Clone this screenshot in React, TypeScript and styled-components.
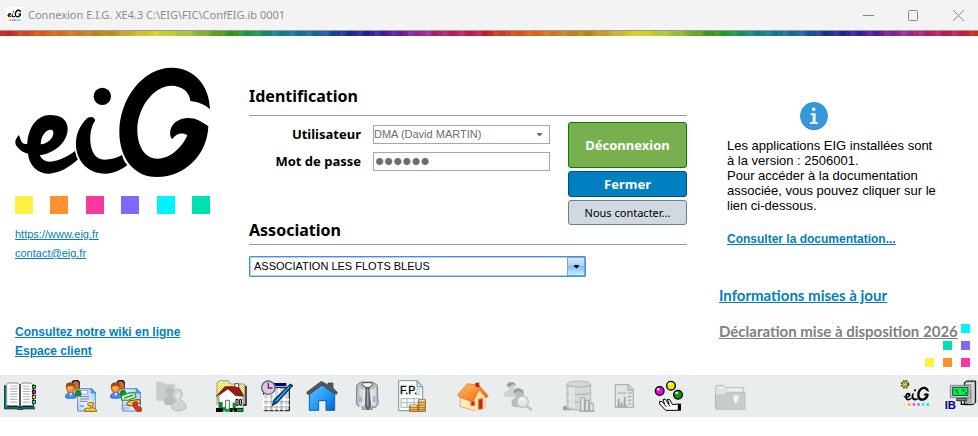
import React from "react";
import styled, { createGlobalStyle } from "styled-components";

const GlobalStyle = createGlobalStyle`
  * { box-sizing: border-box; }
  body { margin: 0; background: #fff; color: #000; font-family: "Liberation Sans", Arial, sans-serif; }
`;

const Window = styled.div`
  display: flex;
  flex-direction: column;
`;

const TitleBar = styled.header`
  display: flex;
  align-items: center;
  height: 31px;
  padding-left: 6px;
  background: #f3f3f3;
  border-bottom: 1px solid #999;
`;

const AppIcon = styled.span`
  display: flex;
  width: 16px;
  height: 16px;
  padding: 1px;
  background: #fff;
`;

const WindowTitle = styled.h1`
  flex: 1;
  margin: 0 0 0 6px;
  font: 400 11px/16px "Noto Sans", sans-serif;
  color: #8c8c8c;
`;

const WindowControls = styled.div`
  display: flex;
  gap: 6px;
`;

const WindowButton = styled.button`
  display: grid;
  place-items: center;
  width: 39px;
  height: 28px;
  padding: 0;
  border: 0;
  background: none;
`;

const Rainbow = styled.div`
  height: 5px;
  background:
    repeating-linear-gradient(90deg, rgba(255,255,255,0.1) 0 4px, rgba(255,255,255,0) 8px 12px, rgba(255,255,255,0.06) 14px, rgba(255,255,255,0) 17px),
    repeating-linear-gradient(90deg, #c01818 0, #cc4020 22px, #e05a10 46px, #c87c20 78px, #b88408 106px, #c8a828 128px, #d8d020 156px, #a0c030 190px, #389010 228px, #189838 246px, #108088 276px, #1860a0 320px, #182888 345px, #2020a0 370px, #581890 395px, #902898 420px, #a82068 438px, #c01848 483px);
`;

const Main = styled.main`
  position: relative;
  display: grid;
  grid-template-columns: 234px minmax(0, 1fr) 291px;
  min-height: 339px;
  padding-left: 15px;
`;

const BrandColumn = styled.section`
  display: flex;
  flex-direction: column;
  align-items: flex-start;
  padding: 31px 0 14px;
`;

const Swatches = styled.div`
  display: flex;
  justify-content: space-between;
  width: 195px;
  margin: 18px 0 11px;
`;

const Swatch = styled.span<{ $color: string; $size?: number }>`
  width: ${(p) => p.$size ?? 18}px;
  height: ${(p) => p.$size ?? 18}px;
  background: ${(p) => p.$color};
`;

const Link = styled.a<{ $bold?: boolean }>`
  color: #0080c0;
  font-size: ${(p) => (p.$bold ? 12 : 11)}px;
  font-weight: ${(p) => (p.$bold ? 700 : 400)};
  line-height: 19px;
`;

const BrandFooter = styled.div`
  display: flex;
  flex-direction: column;
  margin-top: auto;
`;

const FormColumn = styled.form`
  display: flex;
  flex-direction: column;
  padding-top: 48px;
`;

const Heading = styled.h2<{ $tight?: boolean }>`
  margin: 0;
  padding-bottom: ${(p) => (p.$tight ? 2 : 7)}px;
  border-bottom: 1px solid #999;
  font: 700 16px/24px "Noto Sans", sans-serif;
`;

const Login = styled.div`
  display: flex;
  justify-content: space-between;
  margin: 6px 0 -7px;
`;

const Fields = styled.div`
  display: grid;
  grid-template-columns: 112px 177px;
  column-gap: 12px;
  row-gap: 8px;
  align-content: start;
  align-items: center;
  padding-top: 3px;
`;

const Label = styled.label`
  text-align: right;
  font: 700 13px/19px "Noto Sans", sans-serif;
`;

const SelectFrame = styled.span<{ $active?: boolean }>`
  display: grid;
  grid-template-columns: minmax(0, 1fr) ${(p) => (p.$active ? 18 : 19)}px;
  width: ${(p) => (p.$active ? 337 : 177)}px;
  height: ${(p) => (p.$active ? 21 : 19)}px;
  border: 1px solid ${(p) => (p.$active ? "#4a90d8" : "#aca899")};
  border-radius: ${(p) => (p.$active ? 1 : 0)}px;
  box-shadow: ${(p) => (p.$active ? "inset 0 0 0 1px #a8d0f8" : "none")};
`;

const Select = styled.select<{ $active?: boolean }>`
  grid-area: 1 / 1 / 2 / 3;
  width: 100%;
  padding: 0 20px 0 ${(p) => (p.$active ? 4 : 0)}px;
  border: 0;
  appearance: none;
  background: none;
  color: ${(p) => (p.$active ? "#000" : "#6d6d6d")};
  opacity: 1;
  font: 400 11px/17px "Liberation Sans", Arial, sans-serif;
`;

const Arrow = styled.span<{ $active?: boolean }>`
  grid-area: 1 / 2;
  display: grid;
  place-items: center;
  pointer-events: none;
  background: ${(p) => (p.$active ? "linear-gradient(#d8e8fc, #a8d0f8 45%, #80bcf4 50%, #c8f0fc)" : "none")};
  border: ${(p) => (p.$active ? "1px solid #78a8d8" : "0")};
`;

const Password = styled.input`
  width: 177px;
  height: 19px;
  padding: 0 1px;
  border: 1px solid #aca899;
  background: #fff;
  color: #6d6d6d;
  font: 400 26px/17px "Liberation Sans", Arial, sans-serif;
`;

const Actions = styled.div`
  display: flex;
  flex-direction: column;
  gap: 3px;
  width: 119px;
`;

const tones = {
  green: { bg: "#78b050", edge: "#008000", ink: "#fff", height: 46 },
  blue: { bg: "#0080c0", edge: "#005080", ink: "#fff", height: 26 },
  grey: { bg: "#d0d8e0", edge: "#6080a0", ink: "#000", height: 25 },
};

const ActionButton = styled.button<{ $tone: keyof typeof tones }>`
  height: ${(p) => tones[p.$tone].height}px;
  padding: 0;
  border: 1px solid ${(p) => tones[p.$tone].edge};
  border-radius: 3px;
  background: ${(p) => tones[p.$tone].bg};
  color: ${(p) => tones[p.$tone].ink};
  font: ${(p) => (p.$tone === "grey" ? "400 11px" : "700 13px")}/18px "Noto Sans", sans-serif;
`;

const AssociationRow = styled.div`
  display: flex;
  padding-top: 11px;
`;

const InfoColumn = styled.aside`
  display: flex;
  flex-direction: column;
  align-items: flex-start;
  padding: 66px 0 0 32px;
`;

const InfoBox = styled.div`
  display: flex;
  flex-direction: column;
  width: 208px;
  padding-left: 8px;
  margin-bottom: 36px;
`;

const InfoIcon = styled.svg`
  align-self: center;
  margin-right: 26px;
`;

const InfoText = styled.p`
  margin: 8px 0 17px;
  font-size: 13px;
  line-height: 15px;
  white-space: nowrap;
`;

const NewsLink = styled.a<{ $muted?: boolean }>`
  margin-bottom: 16px;
  color: ${(p) => (p.$muted ? "#808080" : "#0080c0")};
  font: 700 15px/20px Lato, sans-serif;
  white-space: nowrap;
`;

const Corner = styled.div`
  position: absolute;
  right: 8px;
  bottom: 8px;
  display: grid;
  grid-template-columns: repeat(3, 9px);
  gap: 8px 9px;
`;

const CornerSwatch = styled(Swatch)<{ $col: number; $row: number }>`
  grid-area: ${(p) => p.$row} / ${(p) => p.$col};
`;

const Toolbar = styled.nav`
  display: flex;
  align-items: center;
  justify-content: space-between;
  height: 42px;
  padding: 0 1px 0 4px;
  background: #e9eded;
`;

const ToolSet = styled.div`
  display: flex;
  gap: 29px;
`;

const ToolGroup = styled.div`
  display: flex;
  gap: 13px;
`;

const ToolButton = styled.button`
  width: 32px;
  height: 32px;
  padding: 0;
  border: 0;
  background: none;
`;

const ToolSvg = styled.svg`
  display: block;
  width: 32px;
  height: 32px;
`;

const colors = ["#fcf040", "#ff9030", "#fc38a0", "#8068ff", "#00f4ff", "#00e0b0"];

function LogoShape() {
  return (
    <g fill="#000" fillRule="evenodd">
      <path d="M57 255C45 267 42 281 52 291C61 302 72 309 84 311C88 347 112 371 148 371C182 369 210 350 234 328C229 322 228 314 225 303C200 321 175 335 146 335C133 334 125 327 119 316C170 309 204 272 203 235C202 208 181 195 150 195C111 195 84 233 82 281C65 285 63 272 57 255ZM122 283C123 252 143 235 157 240C168 252 150 282 122 283Z" />
      <path d="M258 208C267 197 286 199 285 213C264 238 261 328 313 329C333 329 349 324 366 315C370 328 373 336 382 345C362 361 340 371 315 371C264 370 232 334 228 290C226 256 238 229 258 208Z" />
      <circle cx="307" cy="139" r="26" />
      <path d="M630 178C629 105 580 53 515 53C426 53 358 150 358 245C358 323 401 381 471 381C557 381 622 313 625 229C605 214 586 204 565 204C531 204 502 229 513 263L517 267C527 250 548 245 562 256C549 287 514 326 474 326C434 326 412 288 412 239C412 172 462 107 514 107C546 107 569 126 571 153C596 156 613 163 630 178Z" />
    </g>
  );
}

function MiniLogo() {
  return (
    <svg width="14" height="14" viewBox="0 0 42 42" aria-hidden="true">
      <g transform="translate(-3 1) scale(.073)"><LogoShape /></g>
      {colors.map((c, i) => <rect key={c} x={i * 7} y="34" width="5" height="5" fill={c} />)}
    </svg>
  );
}

const DownArrow = ({ color }: { color: string }) => (
  <svg width="7" height="4" viewBox="0 0 7 4" aria-hidden="true">
    <path d="M1 0H6V1L3.500 3.500L1 1Z" fill={color} />
  </svg>
);

const Book = () => (
  <g transform="translate(1 9) scale(1 .88)">
    <path d="M0 8H6V82H44L48 87L52 82H92V88H56V90H40V88H0Z" fill="#007878" />
    <path d="M0 8V88H40V90H56V88H92" fill="none" stroke="#003838" strokeWidth="3" />
    <path d="M7 4L12 0H38L47 6L56 0H80L84 5V77H56L47 83L39 77H7Z" fill="#fff" stroke="#888" strokeWidth="3" />
    <path d="M47 5V82" stroke="#000" strokeWidth="4" />
    <path d="M7 80H40L47 85L54 80H88V4" fill="none" stroke="#000" strokeWidth="3" />
    <path d="M18 11H39M16 20H40M18 29H39M16 38H40M18 47H39M16 56H40M18 65H39M55 11H76M57 20H76M55 29H78M57 38H76M55 47H78M57 56H76M55 65H78" stroke="#b8b8b8" strokeWidth="4" />
    {["#00f000", "#f000f0", "#f0f000", "#00f0f0"].map((c, i) => (
      <rect key={c} x="84" y={9 + i * 17} width="10" height="10" fill={c} stroke="#000" strokeWidth="2" />
    ))}
  </g>
);

const Pair = () => (
  <>
    <path d="M20 4L27 0H40L45 7L44 26H24Z" fill="#281828" />
    <ellipse cx="32" cy="17" rx="10" ry="13" fill="#c87028" />
    <path d="M32 33L44 30L48 38V48H30Z" fill="#189018" stroke="#087008" strokeWidth="2" />
    <path d="M3 44L10 37H25L33 46V53L26 55H5L1 51Z" fill="#4888f0" stroke="#1850b8" strokeWidth="2" />
    <path d="M12 37L17 49L23 37Z" fill="#fff" />
    <ellipse cx="17" cy="24" rx="13" ry="15" fill="#e88c30" stroke="#904010" strokeWidth="2" />
    <path d="M3 23C-1 6 17 5 28 11L31 23L23 17L8 19Z" fill="#984818" />
    <ellipse cx="15" cy="25" rx="7" ry="7" fill="#fca850" />
  </>
);

const BlueSheet = () => (
  <>
    <defs>
      <linearGradient id="sheet" x1="1" y1="0" x2="0" y2="1">
        <stop stopColor="#a0d0f8" /><stop offset=".6" stopColor="#e8f4ff" /><stop offset="1" stopColor="#b8d0f8" />
      </linearGradient>
    </defs>
    <path d="M38 26H80L91 38V93H38Z" fill="url(#sheet)" stroke="#6088d0" strokeWidth="3" />
    <path d="M79 25V39H92Z" fill="#50b0f0" stroke="#2078c8" strokeWidth="2" />
  </>
);

const PeopleMoney = () => (
  <>
    <BlueSheet />
    <path d="M45 31H68V42H45Z" fill="#fff" stroke="#7880b0" strokeWidth="2" />
    <path d="M44 50H72M44 57H72M44 64H68M44 78H58" stroke="#7078b0" strokeWidth="3" />
    <Pair />
    <path d="M68 70L79 67L87 70L81 84H91L95 94H59V87L67 84L75 85L77 76L69 77Z" fill="#f0c020" stroke="#a06808" strokeWidth="3" />
    <path d="M70 73H81M64 89H73M80 89H90" stroke="#fff080" strokeWidth="3" />
  </>
);

const PeopleStamp = () => (
  <>
    <BlueSheet />
    <path d="M32 76H50M32 84H59" stroke="#90a8d8" strokeWidth="3" />
    <Pair />
    <path d="M34 48L57 39L75 38L78 51L53 61L35 60Z" fill="#e0f8e0" stroke="#28a038" strokeWidth="4" />
    <path d="M43 54L70 45" stroke="#28a038" strokeWidth="4" />
    <path d="M49 70L59 62L88 58L92 69L65 78L52 76Z" fill="#f0b850" stroke="#804010" strokeWidth="3" />
    <path d="M69 68L80 64L83 78L94 83L95 93L83 96L70 82Z" fill="#d83818" stroke="#882010" strokeWidth="2" />
  </>
);

const GreyPeople = () => (
  <>
    <path d="M4 6H24L28 12H59V63H7L4 57Z" fill="#c8cccc" stroke="#d8dada" strokeWidth="3" />
    <path d="M28 67V54L40 48L32 38V26L43 20L55 28V41L49 50L61 60V75H30Z" fill="#b8bcbc" />
    <path d="M51 87V72L63 62L54 52V36L63 27L77 29L83 42L76 59L91 71L94 84L80 92H62Z" fill="#d0d4d4" stroke="#b8bcbc" strokeWidth="3" />
    <path d="M62 43L70 37L77 40L73 55L66 58Z" fill="#e2e5e5" />
  </>
);

const FolderHouse = () => (
  <>
    <defs>
      <pattern id="dither" width="6" height="6" patternUnits="userSpaceOnUse">
        <rect width="6" height="6" fill="#fff" /><path d="M0 0H3V3H0ZM3 3H6V6H3Z" fill="#f0e000" />
      </pattern>
    </defs>
    <path d="M3 75V9L10 2H36L42 12H86V73" fill="url(#dither)" stroke="#999" strokeWidth="3" />
    <path d="M90 17V75H82" fill="none" stroke="#000" strokeWidth="4" />
    <path d="M8 48L35 25L70 48H81V87H10Z" fill="#fff" stroke="#404040" strokeWidth="2" />
    <path d="M1 49L27 20H58V15H68V22L83 47H59L36 26Z" fill="#a01818" stroke="#500000" strokeWidth="2" />
    <path d="M57 21V11H68V24Z" fill="#fff" stroke="#600" strokeWidth="2" />
    <path d="M60 58H66V76H60ZM71 58H76V76H71Z" fill="#fff" stroke="#000" strokeWidth="3" />
    <path d="M8 66H20V82H29V62H40V85H50V68H59V83H79V91H8Z" fill="#008838" />
    <path d="M29 61H40V94H29Z" fill="#fff" stroke="#104010" strokeWidth="2" />
    <path d="M0 84H21V96H0ZM41 85H50V96H41Z" fill="#000" />
    <path d="M53 90H82" stroke="#000" strokeWidth="11" />
    <path d="M20 90H42M63 90H80" stroke="#00a830" strokeWidth="8" />
  </>
);

const Planner = () => (
  <>
    <path d="M8 23H85V92H8Z" fill="#d4d4d4" stroke="#000" strokeWidth="3" />
    <path d="M36 9H76V19H44Z" fill="#000080" />
    <path d="M8 44V92M23 44V92M39 33V92M54 24V92M69 40V92M8 59H85M8 75H85" stroke="#fff" strokeWidth="5" />
    <path d="M10 65H78M10 81H78M31 46V91M61 46V91" stroke="#999" strokeWidth="2" />
    <circle cx="22" cy="23" r="20" fill="#d0d0d8" stroke="#686870" strokeWidth="4" />
    <path d="M22 8V24H35" fill="none" stroke="#a000a0" strokeWidth="4" />
    <path d="M88 13L94 17L47 68L35 75L39 60Z" fill="#0878c8" stroke="#003060" strokeWidth="4" />
    <path d="M84 21L46 63" stroke="#60d0ff" strokeWidth="3" />
  </>
);

const BlueHouse = () => (
  <>
    <defs><linearGradient id="homeblue" x1="0" y1="0" x2="1" y2="1"><stop stopColor="#68c0ff" /><stop offset=".6" stopColor="#1898f8" /><stop offset="1" stopColor="#0060c8" /></linearGradient></defs>
    <path d="M10 43L48 15L86 43V91H60V62H38V91H10Z" fill="url(#homeblue)" stroke="#1860a0" strokeWidth="3" />
    <path d="M3 36L46 4L66 15V9H81V24L93 36V42H87L48 14L10 43L3 42Z" fill="#505860" stroke="#303840" strokeWidth="2" />
  </>
);

const Suit = () => (
  <>
    <path d="M17 15L30 6H65L79 16L81 73L74 82L64 81V88H34V81L21 78L16 70Z" fill="#b8bcc0" stroke="#80848c" strokeWidth="3" />
    <path d="M25 21L34 31V82H25ZM64 31L75 20V77H64Z" fill="#d0e0e4" />
    <path d="M24 50H34V66H24ZM65 48H74V66H65Z" fill="#b8a8d8" />
    <path d="M34 28H65V78H34Z" fill="#e0e8ec" />
    <path d="M37 8H59L66 13L50 27L33 13Z" fill="#f8f8f8" stroke="#404850" strokeWidth="3" />
    <path d="M45 22H54L59 79L51 90L43 80Z" fill="#686c74" stroke="#404448" strokeWidth="2" />
    <path d="M50 28V77" stroke="#a0a4ac" strokeWidth="4" />
  </>
);

const Coins = () => (
  <>
    <path d="M68 59H88V94H68ZM41 75H65V94H41Z" fill="#e8c070" stroke="#906020" strokeWidth="3" />
    <path d="M68 67H88M68 75H88M68 83H88M41 82H65M41 89H88" stroke="#b07828" strokeWidth="3" />
    <path d="M70 61H86M43 77H62" stroke="#fff0a0" strokeWidth="3" />
  </>
);

const PaySheet = () => (
  <>
    <path d="M8 2H64L80 20V92H8Z" fill="#f8fcfc" stroke="#809098" strokeWidth="3" />
    <path d="M63 2V21H80Z" fill="#d8e4e8" stroke="#809098" strokeWidth="3" />
    <path d="M15 56H72V82H15ZM15 68H72M33 56V82M54 56V82M60 28H73M60 36H73M60 43H73" fill="none" stroke="#a8b8bc" strokeWidth="3" />
    <text x="12" y="41" fontFamily="Liberation Sans, sans-serif" fontSize="32" stroke="#000" strokeWidth="1">F.P.</text>
    <Coins />
  </>
);

const OrangeHouse = () => (
  <>
    <defs><linearGradient id="warm" x1="0" y1="0" x2="1" y2="1"><stop stopColor="#ffc060" /><stop offset="1" stopColor="#f06008" /></linearGradient></defs>
    <path d="M10 47L36 33L62 29L85 48L84 83L52 92L9 79Z" fill="#ffe8c0" stroke="#d09050" strokeWidth="2" />
    <path d="M52 62L68 28L86 49L84 84L52 93Z" fill="#ffe0a8" />
    <path d="M2 45L31 11L66 16L94 48L87 54L67 29L47 66L6 50Z" fill="url(#warm)" stroke="#e06008" strokeWidth="2" />
    <path d="M55 8H67V23L55 20Z" fill="#b03010" />
    <path d="M42 64H53V77H42ZM65 58L77 56V86L65 88Z" fill="#a03820" stroke="#e07030" strokeWidth="3" />
  </>
);

const SearchPeople = () => (
  <>
    <path d="M6 49V38L22 29L14 17L21 7L34 6L42 14L36 27L43 38L38 52Z" fill="#d0d3d3" />
    <path d="M13 17L20 7H34L43 16L31 13L24 20Z" fill="#989ca0" />
    <path d="M29 77V60L43 50L34 40L37 29L50 24L64 31L66 44L58 54L67 65V81H38Z" fill="#b8bcbc" />
    <path d="M34 38L36 29L49 24L63 32L65 43L53 33Z" fill="#989ca0" />
    <circle cx="62" cy="65" r="17" fill="#e5e8e8" stroke="#c0c4c4" strokeWidth="4" />
    <path d="M74 78L87 88" stroke="#c0c4c4" strokeWidth="8" strokeLinecap="round" />
    <path d="M53 61L61 54L67 63" fill="none" stroke="#fff" strokeWidth="4" />
  </>
);

const Database = () => (
  <>
    <path d="M0 78H12V85H87L96 95H49V91H0Z" fill="#a0a4a4" />
    <path d="M12 12C12 0 83 0 83 12V80C83 93 12 93 12 80Z" fill="#d4d8d8" stroke="#b8bcbc" strokeWidth="3" />
    <path d="M12 13C12 23 83 23 83 13M12 36C12 46 83 46 83 36M12 59C12 69 83 69 83 59" fill="none" stroke="#b4b8b8" strokeWidth="4" />
    <path d="M22 20V80M31 22V84" stroke="#e5e8e8" strokeWidth="7" />
    <path d="M53 53H64V93H53ZM67 61H77V93H67ZM80 70H91V93H80Z" fill="#e0e3e3" stroke="#a0a4a4" strokeWidth="3" />
  </>
);

const Report = () => (
  <>
    <path d="M22 14H61L76 29V82H22Z" fill="#e2e5e5" stroke="#b0b4b4" strokeWidth="4" />
    <path d="M60 14V30H76" fill="#d0d4d4" stroke="#b0b4b4" strokeWidth="4" />
    <path d="M29 39H54M60 39H71M60 50H70M60 61H70M60 72H70" stroke="#b4b8b8" strokeWidth="5" />
    <path d="M32 56V77M41 67V77M50 51V77M28 78H57" stroke="#a0a4a4" strokeWidth="5" />
  </>
);

const Juggler = () => (
  <>
    {[["20", "33", "#f000e0"], ["54", "17", "#f0e800"], ["75", "44", "#089808"]].map(([x, y, c]) => (
      <g key={c}>
        <circle cx={x} cy={y} r="13" fill={c} stroke="#000" strokeWidth="4" />
        <circle cx={Number(x) - 4} cy={Number(y) - 5} r="4" fill="#fff" />
      </g>
    ))}
    <path d="M20 64L27 65L35 73L30 59L36 57L48 72L43 58L50 59L59 74L76 72V91H38L20 72Z" fill="#fff" stroke="#000" strokeWidth="3" />
    <path d="M75 71H84V92H75Z" fill="#000" />
    <path d="M34 74L40 80M44 70L52 79" stroke="#000" strokeWidth="3" />
  </>
);

const GreyFolder = () => (
  <>
    <path d="M4 81V19L10 16H30L36 23H89V83H4Z" fill="#e0e3e3" stroke="#bcc0c0" strokeWidth="3" />
    <path d="M4 45H31L38 38H93V87H6Z" fill="#c8cccc" stroke="#b0b4b4" strokeWidth="2" />
    <path d="M14 24H30M42 29H83" stroke="#f4f6f6" strokeWidth="5" />
    <path d="M59 47L66 44L74 48L73 62L67 66V71H63L58 60Z" fill="#f0f2f2" />
    <path d="M4 88H96" stroke="#c8cccc" strokeWidth="4" />
  </>
);

const EigConfig = () => (
  <>
    <circle cx="15" cy="13" r="10" fill="#e8d838" stroke="#504818" strokeWidth="6" strokeDasharray="5 3" />
    <circle cx="15" cy="13" r="4" fill="#fff" stroke="#605010" strokeWidth="2" />
    <g transform="translate(5 13) scale(.13)"><LogoShape /></g>
    {colors.map((c, i) => <rect key={c} x={10 + i * 14} y="70" width="7" height="7" fill={c} />)}
  </>
);

const Server = () => (
  <>
    <path d="M58 8L66 3H92V67L84 74H58Z" fill="#a8b0b0" stroke="#000" strokeWidth="3" />
    <path d="M63 10H84V71M68 18H81M68 26H81" fill="none" stroke="#e0e4e4" strokeWidth="4" />
    <path d="M16 16H76V53H16Z" fill="#c0c8c8" stroke="#606060" strokeWidth="2" />
    <path d="M23 22H69V46H23Z" fill="#00f050" stroke="#000" strokeWidth="2" />
    <path d="M29 31H37V38H42M51 29H56V36M60 39H66" fill="none" stroke="#087840" strokeWidth="4" />
    <path d="M35 56H65V62H35Z" fill="#909898" stroke="#303030" strokeWidth="3" />
    <path d="M49 64V73H69" fill="none" stroke="#000" strokeWidth="4" />
    <text x="-1" y="87" fill="#000080" fontFamily="Liberation Sans, sans-serif" fontSize="34" fontWeight="700">IB</text>
  </>
);

type Tool = [string, React.FC, boolean?];

const groups: Tool[][] = [
  [["Registre", Book]],
  [["Paie", PeopleMoney], ["Contrats", PeopleStamp], ["Dossiers", GreyPeople, true]],
  [["Hébergement", FolderHouse], ["Planning", Planner], ["Accueil", BlueHouse], ["Personnel", Suit], ["Fiches de paie", PaySheet]],
  [["Domicile", OrangeHouse], ["Recherche", SearchPeople, true]],
  [["Base de données", Database, true], ["Rapports", Report, true], ["Outils", Juggler]],
  [["Archives", GreyFolder, true]],
];

const systemTools: Tool[] = [["Configuration", EigConfig], ["Serveur", Server]];

const renderTool = ([name, Icon, disabled]: Tool) => (
  <ToolButton key={name} type="button" aria-label={name} disabled={disabled}>
    <ToolSvg viewBox="0 0 96 96" aria-hidden="true"><Icon /></ToolSvg>
  </ToolButton>
);

const corner: [string, number, number][] = [
  [colors[4], 3, 1], [colors[5], 2, 2], [colors[3], 3, 2],
  [colors[0], 1, 3], [colors[1], 2, 3], [colors[2], 3, 3],
];

export default function App() {
  return (
    <Window>
      <GlobalStyle />
      <TitleBar>
        <AppIcon><MiniLogo /></AppIcon>
        <WindowTitle>Connexion E.I.G. XE4.3 C:\EIG\FIC\ConfEIG.ib 0001</WindowTitle>
        <WindowControls>
          <WindowButton type="button" aria-label="Réduire">
            <svg width="11" height="11"><path d="M0 5.500H11" stroke="#888" /></svg>
          </WindowButton>
          <WindowButton type="button" aria-label="Agrandir">
            <svg width="11" height="11"><rect x=".5" y=".5" width="9" height="10" rx="1" fill="none" stroke="#888" /></svg>
          </WindowButton>
          <WindowButton type="button" aria-label="Fermer la fenêtre">
            <svg width="11" height="11"><path d="M0 0L11 11M11 0L0 11" stroke="#888" /></svg>
          </WindowButton>
        </WindowControls>
      </TitleBar>
      <Rainbow />
      <Main>
        <BrandColumn>
          <svg width="195" height="111" viewBox="45 51 585 333" role="img" aria-label="eiG"><LogoShape /></svg>
          <Swatches>{colors.map((c) => <Swatch key={c} $color={c} />)}</Swatches>
          <Link href="https://www.eig.fr">https://www.eig.fr</Link>
          <Link href="mailto:contact@eig.fr">contact@eig.fr</Link>
          <BrandFooter>
            <Link $bold href="#wiki">Consultez notre wiki en ligne</Link>
            <Link $bold href="#client">Espace client</Link>
          </BrandFooter>
        </BrandColumn>
        <FormColumn onSubmit={(e) => e.preventDefault()}>
          <Heading>Identification</Heading>
          <Login>
            <Fields>
              <Label htmlFor="user">Utilisateur</Label>
              <SelectFrame>
                <Select id="user" disabled><option>DMA (David MARTIN)</option></Select>
                <Arrow><DownArrow color="#6d6d6d" /></Arrow>
              </SelectFrame>
              <Label htmlFor="password">Mot de passe</Label>
              <Password id="password" type="password" defaultValue="secret" disabled />
            </Fields>
            <Actions>
              <ActionButton type="submit" $tone="green">Déconnexion</ActionButton>
              <ActionButton type="button" $tone="blue">Fermer</ActionButton>
              <ActionButton type="button" $tone="grey">Nous contacter...</ActionButton>
            </Actions>
          </Login>
          <Heading $tight id="association">Association</Heading>
          <AssociationRow>
            <SelectFrame $active>
              <Select $active aria-labelledby="association"><option>ASSOCIATION LES FLOTS BLEUS</option></Select>
              <Arrow $active><DownArrow color="#000" /></Arrow>
            </SelectFrame>
          </AssociationRow>
        </FormColumn>
        <InfoColumn>
          <InfoBox>
            <InfoIcon width="28" height="28" viewBox="0 0 84 84" aria-hidden="true">
              <circle cx="42" cy="43" r="41" fill="#2878b0" />
              <circle cx="42" cy="41" r="41" fill="#3498db" />
              <path d="M36 17H46V26H36ZM32 34H47V60H54V66H30V60H38V40H32Z" fill="#ecf0f1" />
            </InfoIcon>
            <InfoText>
              Les applications EIG installées sont<br />
              à la version : 2506001.<br />
              Pour accéder à la documentation<br />
              associée, vous pouvez cliquer sur le<br />
              lien ci-dessous.
            </InfoText>
            <Link $bold href="#documentation">Consulter la documentation...</Link>
          </InfoBox>
          <NewsLink href="#informations">Informations mises à jour</NewsLink>
          <NewsLink $muted href="#declaration">Déclaration mise à disposition 2026</NewsLink>
        </InfoColumn>
        <Corner aria-hidden="true">
          {corner.map(([c, col, row]) => <CornerSwatch key={c} $color={c} $size={9} $col={col} $row={row} />)}
        </Corner>
      </Main>
      <Toolbar aria-label="Applications">
        <ToolSet>{groups.map((g) => <ToolGroup key={g[0][0]}>{g.map(renderTool)}</ToolGroup>)}</ToolSet>
        <ToolGroup>{systemTools.map(renderTool)}</ToolGroup>
      </Toolbar>
    </Window>
  );
}
